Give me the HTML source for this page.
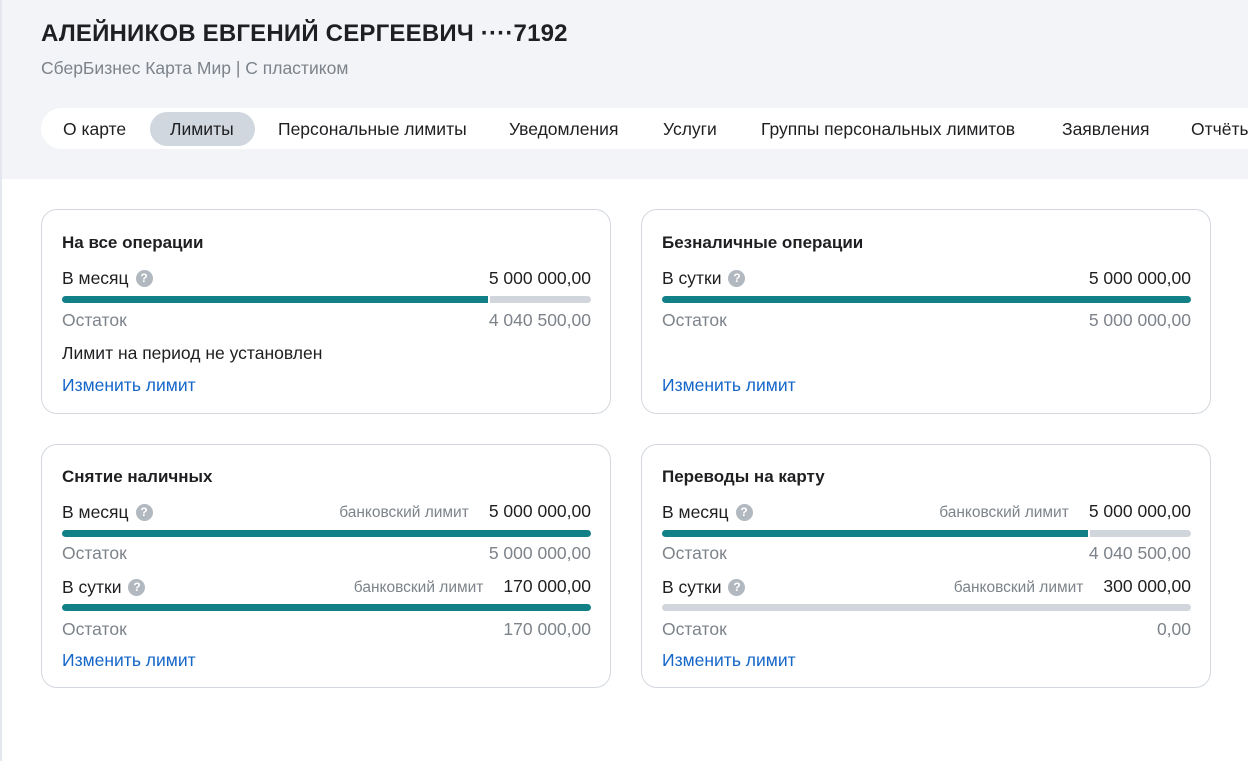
<!DOCTYPE html>
<html><head><meta charset="utf-8"><style>
*{box-sizing:border-box;margin:0;padding:0}
body{width:1248px;height:761px;overflow:hidden;background:#fff;font-family:"Liberation Sans",sans-serif;color:#1f1f22;position:relative}
.lb{position:absolute;left:0;top:0;width:2px;height:761px;background:#e4e8ee;z-index:2}
.hdr{position:absolute;left:0;top:0;width:1248px;height:179px;background:#f2f4f7}
h1{position:absolute;left:41px;top:20px;font-size:24px;font-weight:bold;letter-spacing:0.2px;color:#1f1f22}
.sub{position:absolute;left:41px;top:58px;font-size:17.5px;color:#7d838a}
.tabs{position:absolute;left:41px;top:108px;width:1240px;height:41px;background:#fff;border-radius:21px}
.tab{position:absolute;top:1px;height:41px;line-height:41px;font-size:17.5px;color:#1f1f22;white-space:nowrap}
.pill{position:absolute;left:109px;top:4px;width:105px;height:34px;border-radius:17px;background:#d0d7de}
.card{position:absolute;width:570px;border:1px solid #d3d8de;border-radius:16px;background:#fff}
.ln{position:absolute;left:20px;right:19px;font-size:17.5px;height:22px;line-height:22px;display:flex;justify-content:space-between;align-items:center;white-space:nowrap}
.t{font-weight:bold;font-size:17px}
.g{color:#7d838a}
.lk{color:#1466c9}
.bar{position:absolute;left:20px;right:19px;height:7px;border-radius:4px;background:#d0d6dc;overflow:hidden}
.bar i{position:absolute;left:0;top:0;bottom:0;background:#128087;border-right:2px solid #fff}
.q{display:inline-block;width:17px;height:17px;border-radius:50%;background:#b2b8bf;color:#fff;font-size:12px;font-weight:bold;line-height:17px;text-align:center;margin-left:7px;vertical-align:middle;position:relative;top:-1px}
.bl{font-size:15.5px;color:#7d838a;margin-right:20px}
</style></head><body>
<div class="lb"></div>
<div class="hdr"></div>
<h1>АЛЕЙНИКОВ ЕВГЕНИЙ СЕРГЕЕВИЧ ····7192</h1>
<div class="sub">СберБизнес Карта Мир | С пластиком</div>
<div class="tabs">
<div class="pill"></div>
<div class="tab" style="left:22px">О карте</div>
<div class="tab" style="left:129px">Лимиты</div>
<div class="tab" style="left:237px">Персональные лимиты</div>
<div class="tab" style="left:468px">Уведомления</div>
<div class="tab" style="left:622px">Услуги</div>
<div class="tab" style="left:720px">Группы персональных лимитов</div>
<div class="tab" style="left:1021px">Заявления</div>
<div class="tab" style="left:1150px">Отчёты</div>
</div>

<div class="card" style="left:41px;top:209px;height:205px">
<div class="ln t" style="top:22px"><span>На все операции</span></div>
<div class="ln" style="top:57px"><span>В месяц<span class="q">?</span></span><span>5 000 000,00</span></div>
<div class="bar" style="top:86px"><i style="width:81%"></i></div>
<div class="ln g" style="top:99px"><span>Остаток</span><span>4 040 500,00</span></div>
<div class="ln" style="top:132px"><span>Лимит на период не установлен</span></div>
<div class="ln lk" style="top:164px"><span>Изменить лимит</span></div>
</div>

<div class="card" style="left:641px;top:209px;height:205px">
<div class="ln t" style="top:22px"><span>Безналичные операции</span></div>
<div class="ln" style="top:57px"><span>В сутки<span class="q">?</span></span><span>5 000 000,00</span></div>
<div class="bar" style="top:86px;background:#128087"></div>
<div class="ln g" style="top:99px"><span>Остаток</span><span>5 000 000,00</span></div>
<div class="ln lk" style="top:164px"><span>Изменить лимит</span></div>
</div>

<div class="card" style="left:41px;top:444px;height:244px">
<div class="ln t" style="top:21px"><span>Снятие наличных</span></div>
<div class="ln" style="top:56px"><span>В месяц<span class="q">?</span></span><span><span class="bl">банковский лимит</span>5 000 000,00</span></div>
<div class="bar" style="top:85px;background:#128087"></div>
<div class="ln g" style="top:97px"><span>Остаток</span><span>5 000 000,00</span></div>
<div class="ln" style="top:131px"><span>В сутки<span class="q">?</span></span><span><span class="bl">банковский лимит</span>170 000,00</span></div>
<div class="bar" style="top:159px;background:#128087"></div>
<div class="ln g" style="top:173px"><span>Остаток</span><span>170 000,00</span></div>
<div class="ln lk" style="top:204px"><span>Изменить лимит</span></div>
</div>

<div class="card" style="left:641px;top:444px;height:244px">
<div class="ln t" style="top:21px"><span>Переводы на карту</span></div>
<div class="ln" style="top:56px"><span>В месяц<span class="q">?</span></span><span><span class="bl">банковский лимит</span>5 000 000,00</span></div>
<div class="bar" style="top:85px"><i style="width:81%"></i></div>
<div class="ln g" style="top:97px"><span>Остаток</span><span>4 040 500,00</span></div>
<div class="ln" style="top:131px"><span>В сутки<span class="q">?</span></span><span><span class="bl">банковский лимит</span>300 000,00</span></div>
<div class="bar" style="top:159px"></div>
<div class="ln g" style="top:173px"><span>Остаток</span><span>0,00</span></div>
<div class="ln lk" style="top:204px"><span>Изменить лимит</span></div>
</div>
</body></html>
